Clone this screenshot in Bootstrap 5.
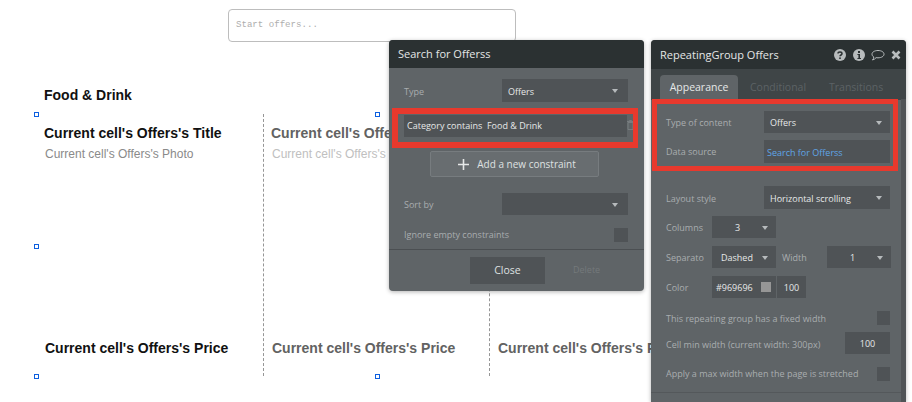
<!DOCTYPE html>
<html lang="en">
<head>
<meta charset="utf-8">
<title>Editor</title>
<link href="https://cdn.jsdelivr.net/npm/bootstrap@5.3.0/dist/css/bootstrap.min.css" rel="stylesheet">
<style>
html,body{margin:0;width:912px;height:402px;overflow:hidden;background:#fff}
.stage{position:relative;width:912px;height:402px;overflow:hidden;font-family:"Liberation Sans",Arial,sans-serif}
.cv{position:absolute;white-space:nowrap;line-height:1}
.ttl{font-weight:700;font-size:14px;color:#111}
.ttl.dim{color:#626262}
.sub{font-size:12px;color:#8a8a8a}
.sub.dim{color:#c0c0c0}
.startbox{left:228px;top:9px;width:288px;height:33px;border:1px solid #bdbdbd;border-radius:4px;padding:9px 7px;font:9.1px/12px "Liberation Mono",monospace;color:#aeaeae}
.sep{width:0;border-left:1px dashed #969696;top:114px;height:262px}
.hnd{width:5px;height:5px;border:1px solid #0d5fe0;background:#fff}
.win{position:absolute;background:#5f6467;border-radius:4px;font-family:"Open Sans",sans-serif;font-size:9px;color:#a9adaf;box-shadow:0 1px 4px rgba(0,0,0,.3);overflow:hidden}
.win-s{left:389px;top:40px;width:255px;height:251px}
.win-r{left:651px;top:40px;width:255px;height:362px;border-radius:4px 4px 0 0}
.wh{background:#2b3132;color:#e4e6e6;font-size:11px;height:28px;padding:1px 9px 0}
.ctl{background:#4f5356;color:#e6e8e8;height:22px;padding:1px 6px 0;font-size:9px;line-height:1}
.caret{width:0;height:0;border-left:3.5px solid transparent;border-right:3.5px solid transparent;border-top:4px solid #b6babc}
.chk{width:14px;height:14px;background:#4f5356}
.cright{width:13px;height:14px;background:#4f5356}
.redS{position:absolute;left:3px;top:68px;width:246px;height:40px;border:6px solid #e8392d;border-right-width:5px;z-index:2}
.inS{position:absolute;left:6px;top:1px;width:223px;height:22px;background:#4f5356;color:#e6e8e8;padding:0 3px}
.addb{position:absolute;left:41px;top:111px;width:169px;height:26px;background:#686d70;border:1px solid #777c7f;border-radius:2px;color:#dfe1e1;font-size:10px;padding-left:5px;padding-top:1px}
.closeb{position:absolute;left:81px;top:217px;width:75px;height:27px;background:#4f5356;color:#dfe1e1;font-size:10.5px}
.del{position:absolute;left:184px;top:224px;color:#74797b;font-size:9px;line-height:12px}
.hr1{position:absolute;left:0;right:0;top:209px;height:1px;background:#4b4f52}
.tabs{background:#3f4547;height:31px;padding:6px 0 0 9px;font-size:10.5px;color:#5c6265}
.tabon{width:78px;height:25px;background:#5f6467;color:#e6e8e8;border-radius:4px 4px 0 0;padding-top:1px}
.tb{position:absolute;top:0;line-height:25px}
.bar{position:absolute;right:0;top:59px;bottom:0;width:5px;background:#4f5356}
.redR{position:absolute;left:1px;top:59px;width:246px;height:72px;border:5px solid #e8392d;z-index:2}
.ab{position:absolute}
.lb{position:absolute;line-height:12px;white-space:nowrap}
.hr2{position:absolute;left:0;right:5px;height:1px;background:#54585b}
.pc{padding-right:8.5px}
.hicons{gap:6px}
.hicons .nudge{margin-left:1px}
</style>
</head>
<body>
<div class="stage">
  <div class="cv startbox">Start offers...</div>

  <div class="cv ttl" style="left:44px;top:88px">Food &amp; Drink</div>

  <div class="cv ttl" style="left:44px;top:126px">Current cell's Offers's Title</div>
  <div class="cv sub" style="left:45px;top:148px">Current cell's Offers's Photo</div>
  <div class="cv ttl dim" style="left:271px;top:126px">Current cell's Offers's Title</div>
  <div class="cv sub dim" style="left:272px;top:148px">Current cell's Offers's Photo</div>

  <div class="cv ttl" style="left:45px;top:341px">Current cell's Offers's Price</div>
  <div class="cv ttl dim" style="left:272px;top:341px">Current cell's Offers's Price</div>
  <div class="cv ttl dim" style="left:498px;top:341px">Current cell's Offers's Price</div>

  <div class="cv sep" style="left:263px"></div>
  <div class="cv sep" style="left:489px"></div>

  <div class="cv hnd" style="left:34px;top:112px"></div>
  <div class="cv hnd" style="left:375px;top:112px"></div>
  <div class="cv hnd" style="left:34px;top:244px"></div>
  <div class="cv hnd" style="left:34px;top:374px"></div>
  <div class="cv hnd" style="left:375px;top:374px"></div>

  <section class="win win-s">
    <div class="wh d-flex align-items-center">Search for Offerss</div>
    <span class="lb" style="left:15px;top:46px">Type</span>
    <div class="ctl ab d-flex align-items-center justify-content-between" style="left:113px;top:39px;width:126px;height:23px"><span>Offers</span><i class="caret me-1"></i></div>
    <div class="redS"><div class="inS d-flex align-items-center">Category contains&nbsp; Food &amp; Drink</div></div>
    <svg class="ab" style="left:238px;top:80px;z-index:1" width="7" height="10" viewBox="0 0 7 10"><path d="M1 2.500h5V9.500H1zM0 1.500h7M2.500 1.500V.5h2v1" fill="none" stroke="#777c7f"/></svg>
    <div class="addb d-flex align-items-center justify-content-center gap-2">
      <svg width="11" height="11" viewBox="0 0 11 11"><path d="M5.500 0v11M0 5.500h11" stroke="#e6e8e8" stroke-width="1.600"/></svg>
      <span>Add a new constraint</span>
    </div>
    <span class="lb" style="left:15px;top:159px">Sort by</span>
    <div class="ctl ab d-flex align-items-center justify-content-end" style="left:113px;top:153px;width:126px"><i class="caret me-1"></i></div>
    <span class="lb" style="left:15px;top:189px">Ignore empty constraints</span>
    <div class="chk ab" style="left:225px;top:188px"></div>
    <div class="hr1"></div>
    <div class="closeb d-flex align-items-center justify-content-center">Close</div>
    <span class="del">Delete</span>
  </section>

  <section class="win win-r">
    <div class="wh d-flex align-items-center justify-content-between" style="height:29px;padding:1px 5px 0 9px">
      <span>RepeatingGroup Offers</span>
      <span class="d-flex align-items-center hicons">
        <svg width="12" height="12" viewBox="0 0 12 12"><circle cx="6" cy="6" r="6" fill="#b8bcbd"/><path d="M4 4.600C4 3.400 5 3 6 3s2 .6 2 1.700c0 1.300-2 1.300-2 2.600" fill="none" stroke="#2b3132" stroke-width="1.500"/><rect x="5.200" y="8.400" width="1.600" height="1.600" fill="#2b3132"/></svg>
        <svg class="nudge" width="12" height="12" viewBox="0 0 12 12"><circle cx="6" cy="6" r="6" fill="#b8bcbd"/><rect x="5" y="2" width="2" height="2" fill="#2b3132"/><path d="M4.400 5h2.600v4h1v1H4.400V9h1V6h-1z" fill="#2b3132"/></svg>
        <svg width="14" height="12" viewBox="0 0 14 12"><path d="M7 1.500c3.300 0 6 1.500 6 3.700S10.300 8.800 7 8.800c-.7 0-1.300 0-1.900-.2C4.200 9.800 3 10.600 1.500 11c.8-.8 1.200-1.700 1.300-3C1.700 7.400 1 6.400 1 5.200 1 3 3.700 1.500 7 1.500z" fill="none" stroke="#b8bcbd"/></svg>
        <svg width="10" height="10" viewBox="0 0 10 10"><path d="M1.500 1.500l7 7M8.500 1.500l-7 7" stroke="#b8bcbd" stroke-width="2.600"/></svg>
      </span>
    </div>
    <div class="tabs position-relative">
      <div class="tabon d-flex align-items-center justify-content-center">Appearance</div>
      <span class="tb" style="left:99px;top:6px">Conditional</span>
      <span class="tb" style="left:178px;top:6px">Transitions</span>
    </div>
    <div class="bar"></div>
    <div class="redR"></div>

    <span class="lb" style="left:15px;top:77px">Type of content</span>
    <div class="ctl ab d-flex align-items-center justify-content-between pc" style="left:113px;top:71px;width:126px"><span>Offers</span><i class="caret"></i></div>
    <span class="lb" style="left:15px;top:106px">Data source</span>
    <div class="ctl ab d-flex align-items-center" style="left:113px;top:100px;width:126px;height:23px;padding:1px 3px 0;color:#5fa5e6">Search for Offerss</div>

    <span class="lb" style="left:15px;top:153px">Layout style</span>
    <div class="ctl ab d-flex align-items-center justify-content-between pc" style="left:113px;top:146px;width:126px;height:23px"><span>Horizontal scrolling</span><i class="caret"></i></div>

    <span class="lb" style="left:15px;top:182px">Columns</span>
    <div class="ctl ab d-flex align-items-center justify-content-between" style="left:61px;top:176px;width:64px;padding:1px 8.500px 0 23px"><span>3</span><i class="caret"></i></div>

    <span class="lb" style="left:15px;top:212px">Separato</span>
    <div class="ctl ab d-flex align-items-center justify-content-between" style="left:61px;top:206px;width:64px;padding:1px 8.500px 0 9px"><span>Dashed</span><i class="caret"></i></div>
    <span class="lb" style="left:131px;top:212px">Width</span>
    <div class="ctl ab d-flex align-items-center justify-content-between" style="left:176px;top:206px;width:64px;padding:1px 8.500px 0 23px"><span>1</span><i class="caret"></i></div>

    <span class="lb" style="left:15px;top:242px">Color</span>
    <div class="ctl ab d-flex align-items-center justify-content-between" style="left:61px;top:236px;width:64px;padding:0 5px 0 4px"><span>#969696</span><i class="ab" style="left:49px;top:6px;width:10px;height:10px;background:#969696"></i></div>
    <div class="ctl ab d-flex align-items-center justify-content-center" style="left:126px;top:236px;width:29px">100</div>

    <span class="lb" style="left:15px;top:273px">This repeating group has a fixed width</span>
    <div class="cright ab" style="left:226px;top:271px"></div>

    <span class="lb" style="left:15px;top:299px">Cell min width (current width: 300px)</span>
    <div class="ctl ab d-flex align-items-center justify-content-center" style="left:194px;top:292px;width:45px">100</div>

    <span class="lb" style="left:15px;top:328px">Apply a max width when the page is stretched</span>
    <div class="cright ab" style="left:226px;top:327px"></div>
    <div class="hr2" style="top:352px"></div>
  </section>
</div>
<script src="https://cdn.jsdelivr.net/npm/bootstrap@5.3.0/dist/js/bootstrap.bundle.min.js"></script>
</body>
</html>
